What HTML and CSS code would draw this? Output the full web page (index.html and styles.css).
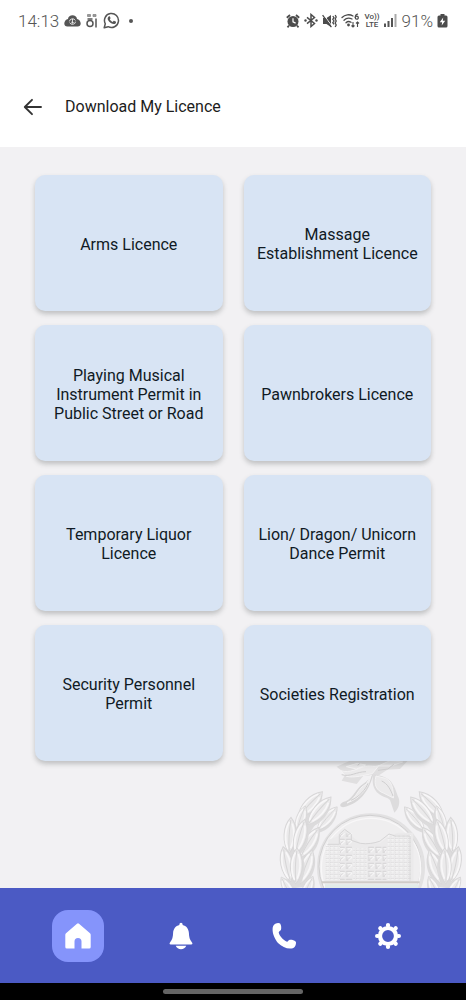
FILE: index.html
```html
<!DOCTYPE html>
<html lang="en">
<head>
<meta charset="utf-8">
<meta name="viewport" content="width=device-width, initial-scale=1">
<title>Download My Licence</title>
<link rel="stylesheet" href="styles.css">
</head>
<body>
<div class="app">
  <div class="status">
    <div class="status-group">
      <span class="clock">14:13</span>
      <svg width="17" height="12" viewBox="0 0 17 12"><path fill="#555" d="M4 4C4.300 1.500 6.200.3 8.500.3s4.200 1.200 4.500 3.700c2 .5 3.700 2.300 3.700 4.500 0 1.800-1.200 3-3 3H3.300c-1.800 0-3-1.200-3-3C.3 6.300 2 4.500 4 4z"/><path d="M5.400 6.400a3.200 3.200 0 0 1 6-.9M11.600 6.700a3.200 3.200 0 0 1-6 .9M8.500 4v4.200M7.200 6.900l1.300 1.300 1.300-1.300" fill="none" stroke="#fff" stroke-width=".8"/></svg>
      <svg width="12" height="15" viewBox="0 0 12 15"><path d="M1.500 1.500h3v2h-3zM7 1.500h3v2H7z" fill="#999" stroke="#888" stroke-width=".8"/><g fill="none" stroke="#555" stroke-width="1.500"><circle cx="4" cy="10.500" r="3"/><path d="M1.500 6h5M10 5.500v9"/></g></svg>
      <svg width="17" height="17" viewBox="0 0 17 17"><path d="M1.200 15.800l1.100-4A7 7 0 1 1 5.200 14.700z" fill="none" stroke="#555" stroke-width="1.500" stroke-linejoin="round"/><path fill="#555" d="M5.700 4.500c.5-.5 1-.4 1.200.1l.6 1.400c.1.500-.4.900-.7 1.300.7 1.300 1.600 2.100 2.900 2.700l.8-1c.3-.3.600-.2.900-.1l1.300.7c.6.300.3 1.400-.2 1.900-1.100 1-2.700.7-4.300-.2-1.500-.8-2.600-2.100-3.300-3.500-.5-1.200-.2-2.500.8-3.300z"/></svg>
      <span class="status-dot"></span>
    </div>
    <div class="status-group status-right">
      <svg width="14" height="14" viewBox="0 0 14 14"><circle cx="7" cy="7.500" r="5.500" fill="#4c4c4c"/><path d="M.8 3.800L4 1M13.200 3.800L10 1M3 11.500l-1.500 1.800M11 11.500l1.500 1.800" stroke="#4c4c4c" stroke-width="1.800"/><path d="M7 4.300v3.500l2.600 1.300" fill="none" stroke="#fff" stroke-width="1.200"/></svg>
      <svg width="14" height="15" viewBox="0 0 14 15"><path d="M3 4.300l7.500 6.200L7 13.500v-12l3.500 3L3 10.700" fill="none" stroke="#4c4c4c" stroke-width="1.500"/><circle cx="1.500" cy="7.500" r="1.200" fill="#4c4c4c"/><circle cx="12.500" cy="7.500" r="1.200" fill="#4c4c4c"/></svg>
      <svg width="15" height="14" viewBox="0 0 15 14"><path fill="#4c4c4c" d="M1 4h3.500L9 1v12L4.500 10H1z"/><path d="M1.500.5l8 11" stroke="#fff" stroke-width="1"/><path d="M.6 1.200l8.800 12M10.800 2l1.200 1.700-1.200 1.600 1.200 1.700-1.200 1.700 1.200 1.600M13.200 1l1 2-1 2 1 2-1 2 1 2-1 2" fill="none" stroke="#4c4c4c" stroke-width="1.300"/></svg>
      <svg width="19" height="15" viewBox="0 0 19 15"><g fill="none" stroke="#4c4c4c" stroke-width="1.300" stroke-linecap="round"><path d="M1 4.500C4 1.400 8.600 1 12 3"/><path d="M3 7.200c2.300-2.300 5.400-2.500 8-1.200M5 9.700c1.400-1.400 3.400-1.500 5-.4"/><path d="M16.500 1.200c-1.500.3-2.200 1.700-2.200 3.300"/><circle cx="15.800" cy="4.700" r="1.500"/></g><circle cx="7.500" cy="12" r="1.400" fill="#4c4c4c"/><path d="M12 9v5M10.500 12.500L12 14l1.500-1.500M16.500 14V9M15 10.500L16.500 9l1.500 1.500" fill="none" stroke="#4c4c4c" stroke-width="1.100"/></svg>
      <span class="volte"><span>Vo))</span><span>LTE</span></span>
      <svg width="14" height="13" viewBox="0 0 14 13"><path fill="#555" d="M0 9.500h2V13H0zM3.500 7h2v6h-2zM7 4h2v9H7z"/><path fill="#aaa" d="M10.500 0h2v13h-2z"/></svg>
      <span class="percent">91%</span>
      <svg width="11" height="14" viewBox="0 0 11 14"><path fill="#4c4c4c" d="M3.500 0h4v1.500H9a1.500 1.500 0 0 1 1.500 1.500v9A1.500 1.500 0 0 1 9 13.500H2A1.500 1.500 0 0 1 .5 12V3A1.500 1.500 0 0 1 2 1.500h1.500z"/><path fill="#fff" d="M6.200 3.500L2.800 8.200h2.300l-.4 3.300 3.500-4.800H5.800z"/></svg>
    </div>
  </div>

  <header class="header">
    <button class="back" type="button" aria-label="Back"><svg width="20" height="20" viewBox="0 0 20 20"><path d="M18 10H2.500M9 2.800L1.800 10 9 17.200" fill="none" stroke="#333" stroke-width="1.900" stroke-linecap="round" stroke-linejoin="round"/></svg></button>
    <h1 class="title">Download My Licence</h1>
  </header>

  <main class="content">
    <svg class="emblem" width="201" height="138" viewBox="0 0 603 414" aria-hidden="true">
      <defs>
        <g id="leaf">
          <path d="M0-56C24-28 24 20 0 52-24 20-24-28 0-56z" fill="#dcdbdc" transform="translate(7 8)"/>
          <path d="M0-56C24-28 24 20 0 52-24 20-24-28 0-56z" fill="#ebeaeb" stroke="#d8d7d8" stroke-width="3"/>
          <path d="M-4-42C-17-17-16 17-4 40M5-38C14-14 12 14 4 36" fill="none" stroke="#f8f7f8" stroke-width="5"/>
          <path d="M0-48C-4-12-4 14 0 46" fill="none" stroke="#d6d5d6" stroke-width="3"/>
        </g>
        <g id="branch">
          <path d="M174 168C115 215 77 290 92 414" fill="none" stroke="#dddcdd" stroke-width="44"/>
          <use href="#leaf" transform="translate(134 166) rotate(43)"/>
          <use href="#leaf" transform="translate(186 207) rotate(40) scale(.85)"/>
          <use href="#leaf" transform="translate(162 184) rotate(40)"/>
          <use href="#leaf" transform="translate(107 210) rotate(18) scale(.8)"/>
          <use href="#leaf" transform="translate(75 258) rotate(3)"/>
          <use href="#leaf" transform="translate(132 280) rotate(32)"/>
          <use href="#leaf" transform="translate(105 262) rotate(15)"/>
          <use href="#leaf" transform="translate(66 345) rotate(-12)"/>
          <use href="#leaf" transform="translate(123 353) rotate(20)"/>
          <use href="#leaf" transform="translate(94 350) rotate(2)"/>
          <use href="#leaf" transform="translate(71 420) rotate(-30) scale(.8)"/>
          <use href="#leaf" transform="translate(126 420) rotate(24) scale(.8)"/>
        </g>
        <pattern id="floors" width="13" height="12" patternUnits="userSpaceOnUse"><path d="M0 2h10M2 0v9" stroke="#dad9da" stroke-width="2"/><path d="M0 5h10M5 2v9" stroke="#f7f6f7" stroke-width="2"/></pattern>
        <pattern id="tower" width="22" height="24" patternUnits="userSpaceOnUse"><path d="M1 4h18M3 2v19M5 20L18 6" stroke="#d5d4d5" stroke-width="3"/><path d="M4 8h15M8 19L20 9" stroke="#f8f7f8" stroke-width="3"/></pattern>
      </defs>
      <use href="#branch"/>
      <use href="#branch" transform="translate(635 0) scale(-1 1)"/>
      <circle cx="318" cy="352" r="156" fill="#ebeaeb" stroke="#e2e1e2" stroke-width="12"/>
      <circle cx="315" cy="349" r="153" fill="#efeeef" stroke="#d0cfd0" stroke-width="3"/>
      <circle cx="318" cy="354" r="149" fill="none" stroke="#f8f7f8" stroke-width="4"/>
      <path d="M190 270l35-14 15-18 20 20 25 22h60l30-24 25-8h45v145H180z" fill="#ebeaeb"/>
      <path d="M180 284h45v106h-45zM368 254h70v136h-70zM265 295h40v95h-40z" fill="url(#floors)"/>
      <path d="M225 250h37v140h-37zM308 286h56v104h-56z" fill="url(#tower)"/>
      <path d="M187 283h36v-30l16-15 20 15v18l27 9c20 3 40 0 58-6l28-22 18 6h45v134" fill="none" stroke="#d6d5d6" stroke-width="3"/>
      <path d="M170 397h294" stroke="#cfccc8" stroke-width="6"/>
      <path d="M180 403h280v11H180z" fill="#e2ebe9"/>
      <path d="M215 50l40-18 60-12 115 10-25 27-38 2-24 16-48 2-20 25-45-10 12-20z" fill="#e0dfe0"/>
      <path d="M325 72c-10 42-35 88-91 100-15-2-8-15 8-18 28-14 28-37 52-52 14-8 20-19 31-30z" fill="#d8d7d8"/>
      <path d="M325 72c-4 20-4 45 18 61 12 10 24 8 32 17l13 38c12-10 18-27 13-44-9-19-12-48-39-61-14-7-23-7-37-11z" fill="#dddcdd"/>
      <path d="M318 76c-7 34-26 66-72 83 33-18 30-43 58-57zM333 78c-8 28 3 44 22 51l30 15c1-28-6-53-24-59zM227 62c28 9 53-8 75-13 15-4 26 4 40-3l-20 25c-24 4-54 14-78 8zM244 50l32-10 26 5-28 12zM340 48l35-16 38 4-37 12z" fill="#ebeaeb" stroke="#f4f3f4" stroke-width="3"/>
      <path d="M230 74c25 8 45-9 73-9M258 151c25-10 45-34 51-51M350 93c18 8 27 26 34 45M278 46l6-5M339 61l30-4 17-14" fill="none" stroke="#cfcecf" stroke-width="3"/>
    </svg>
    <div class="grid">
      <button class="card" type="button">Arms Licence</button>
      <button class="card" type="button">Massage Establishment Licence</button>
      <button class="card" type="button">Playing Musical Instrument Permit in Public Street or Road</button>
      <button class="card" type="button">Pawnbrokers Licence</button>
      <button class="card" type="button">Temporary Liquor Licence</button>
      <button class="card" type="button">Lion/ Dragon/ Unicorn Dance Permit</button>
      <button class="card" type="button">Security Personnel Permit</button>
      <button class="card" type="button">Societies Registration</button>
    </div>
  </main>

  <nav class="nav">
    <button class="tab tab-active" type="button" aria-label="Home"><svg width="28" height="28" viewBox="0 0 28 28"><path fill="#fff" d="M13 1.700a1.600 1.600 0 0 1 2 0l11 9.500q.7.600.7 1.500V25q0 1.500-1.500 1.500H17.500V19.500a3.500 3.500 0 0 0-7 0v7H2.800q-1.500 0-1.500-1.500V12.700q0-.9.700-1.500z"/></svg></button>
    <button class="tab" type="button" aria-label="Notifications"><svg width="28" height="28" viewBox="0 0 28 28"><path fill="#fff" d="M12.400 2.300a1.600 1.600 0 0 1 3.200 0v.8c3.800.8 6.100 4 6.300 8 .2 4.200.7 6.400 3.100 9.500.8 1.200.4 1.900-.7 1.900H3.700c-1.100 0-1.500-.7-.7-1.900 2.400-3.100 2.900-5.300 3.100-9.500.2-4 2.500-7.200 6.300-8zM8.700 23.700h10.600c-1 2.300-2.900 3.500-5.300 3.500s-4.300-1.200-5.300-3.500z"/></svg></button>
    <button class="tab" type="button" aria-label="Phone"><svg width="28" height="28" viewBox="0 0 28 28"><path fill="#fff" d="M4.300 1.700C6 1 8.200.8 9.100 1.600c1.200 1.600 1.400 4.300.9 6.200-.5 1.400-2.100 1.300-2.300 2.800.9 3.700 4.300 7.500 8.300 9.200 1.100-.1 1.300-1.900 2.800-2.100 2.100-.2 4.500.5 5.800 1.700 1 1 .2 3.900-1 5.600-1.100 1.300-2.500 1.600-4.300 1.600-4.300.1-8.600-2.100-12.300-5.600C3.800 17 1.400 11.900 1.600 7c0-2.300.7-4.300 2.700-5.300z"/></svg></button>
    <button class="tab" type="button" aria-label="Settings"><svg width="28" height="28" viewBox="0 0 28 28"><g fill="none" stroke="#fff"><circle cx="14" cy="14" r="8" stroke-width="4.200"/><path d="M14 3.500v-.4M14 24.900v-.4M3.500 14h-.4M24.900 14h-.4M6.500 6.500l-.2-.2M21.500 6.500l.2-.2M6.500 21.500l-.2.200M21.500 21.500l.2.200" stroke-width="4.200" stroke-linecap="round"/></g></svg></button>
  </nav>
  <div class="gesture"><span class="gesture-bar"></span></div>
</div>
</body>
</html>
```
FILE: styles.css
```css
* {
  box-sizing: border-box;
}

body {
  margin: 0;
  background: #fff;
  color: #101a24;
  font-family: Roboto, "Liberation Sans", sans-serif;
}

button {
  margin: 0;
  padding: 0;
  border: 0;
  background: none;
  color: inherit;
  font: inherit;
}

svg {
  display: block;
  flex: none;
}

.app {
  display: flex;
  flex-direction: column;
  min-height: 100vh;
}

.status {
  display: flex;
  align-items: center;
  justify-content: space-between;
  height: 41px;
  padding: 0 18px;
  color: #555;
  font-size: 17px;
  font-weight: 300;
}

.status-group {
  display: flex;
  align-items: center;
  gap: 5px;
}

.status-right {
  gap: 4px;
}

.status-dot {
  width: 4px;
  height: 4px;
  margin-left: 4px;
  border-radius: 50%;
  background: #555;
}

.volte {
  display: flex;
  flex-direction: column;
  align-items: center;
  color: #4c4c4c;
  font-size: 8px;
  font-weight: 500;
  line-height: 8px;
}

.header {
  display: flex;
  align-items: center;
  gap: 22px;
  height: 106px;
  padding: 26px 23px 0;
}

.title {
  margin: 0;
  color: #1c1c1c;
  font-size: 16px;
  font-weight: 400;
  line-height: 20px;
}

.content {
  position: relative;
  flex: 1;
  padding: 28px 35px;
  background: #f2f1f3;
}

.emblem {
  position: absolute;
  right: 0;
  bottom: 0;
}

.grid {
  position: relative;
  display: grid;
  grid-template-columns: 1fr 1fr;
  grid-auto-rows: 136px;
  gap: 14px 21px;
}

.card {
  padding: 2px 12px 0;
  border-radius: 10px;
  background: #d8e4f4;
  box-shadow: 0 3px 5px rgba(60, 70, 70, 0.28);
  font-size: 16px;
  line-height: 19px;
  text-align: center;
}

.nav {
  display: flex;
  align-items: center;
  justify-content: space-around;
  height: 95px;
  padding: 0 26px;
  background: #4b5ac4;
}

.tab {
  display: grid;
  place-items: center;
  width: 52px;
  height: 52px;
  border-radius: 16px;
}

.tab-active {
  background: #8594fb;
}

.gesture {
  display: flex;
  align-items: center;
  justify-content: center;
  height: 17px;
  background: #000;
}

.gesture-bar {
  width: 30%;
  height: 5px;
  border-radius: 3px;
  background: #656565;
}
```
